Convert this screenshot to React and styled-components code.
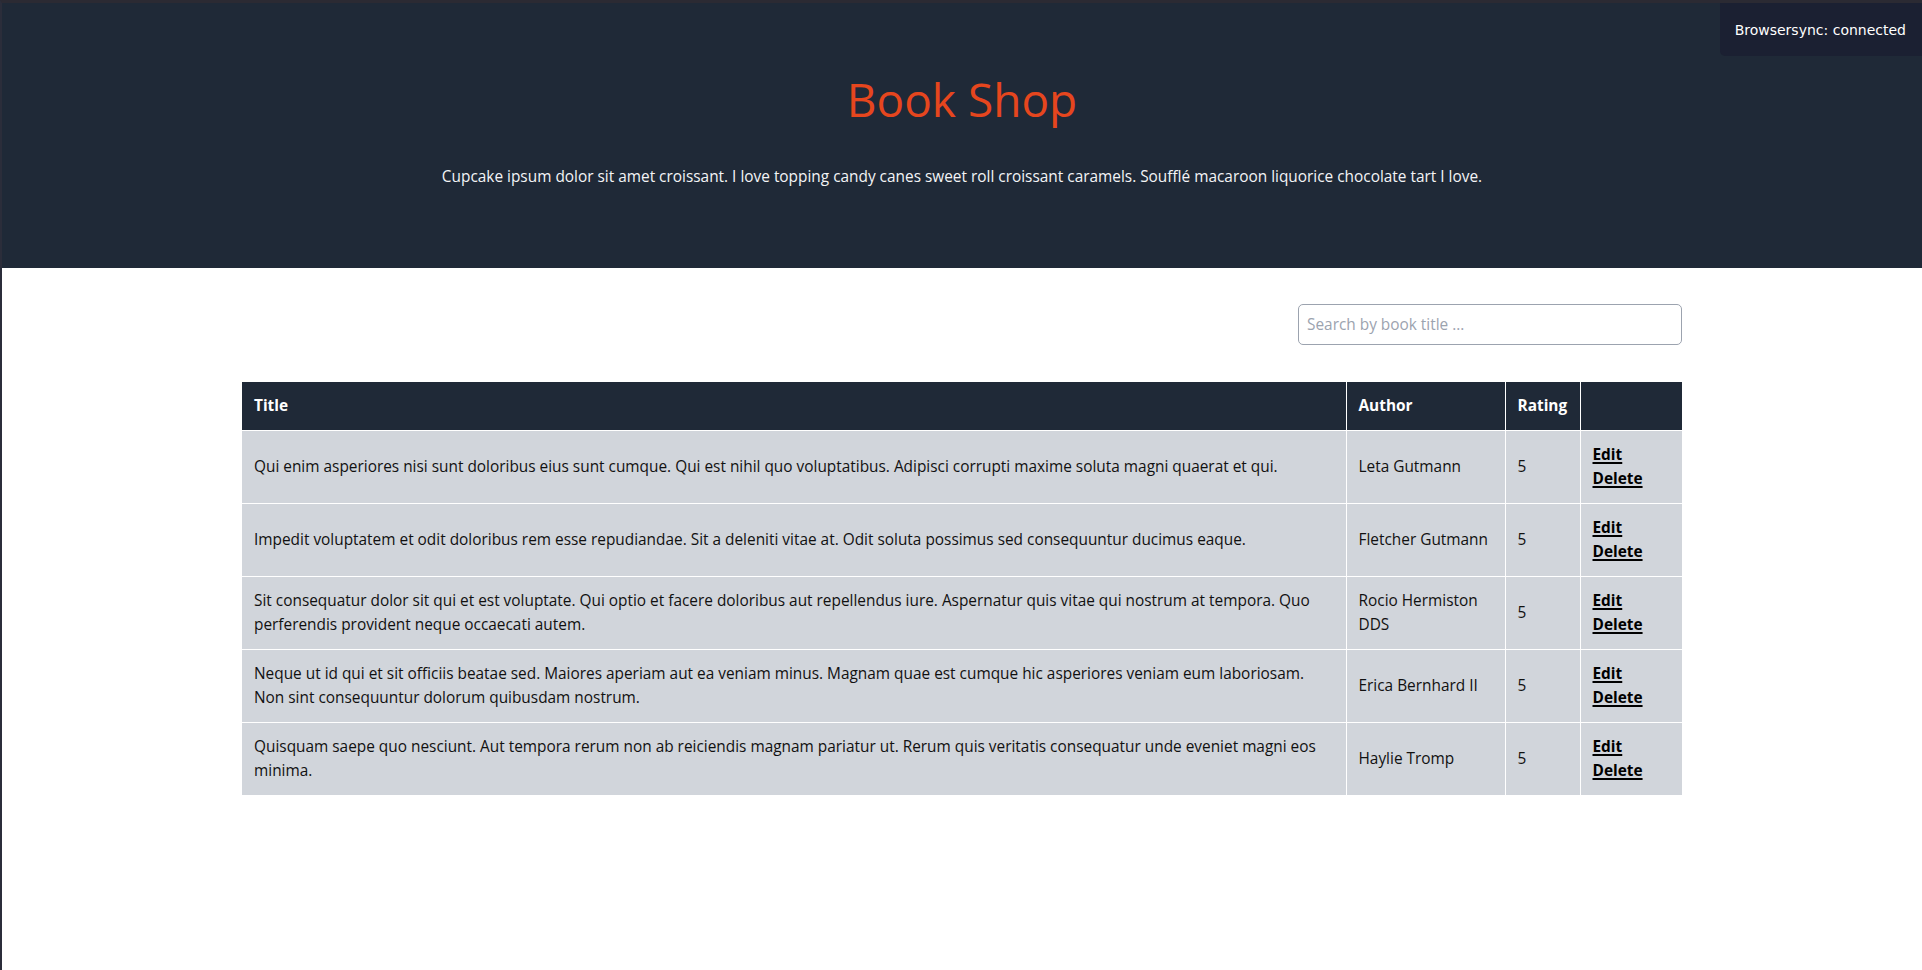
import React from 'react';
import styled, { createGlobalStyle } from 'styled-components';

const FONT = `"Open Sans", "Noto Sans", Arial, sans-serif`;

const GlobalStyle = createGlobalStyle`
  * { box-sizing: border-box; }
  html, body { margin: 0; padding: 0; background: #ffffff; }
  body { font-family: ${FONT}; color: #111827; }
`;

const Page = styled.div`
  min-height: 970px;
  border-top: 3px solid #2b2a33;
  border-left: 2px solid #2b2d3a;
  background: #ffffff;
`;

const Hero = styled.header`
  background: #1f2937;
  height: 265px;
  display: flex;
  flex-direction: column;
  align-items: center;
  padding-top: 73px;
`;

const Title = styled.h1`
  margin: 0;
  font-size: 46px;
  line-height: 46px;
  font-weight: 400;
  color: #e6461e;
`;

const Lead = styled.p`
  margin: 43px 0 0;
  font-size: 15.4px;
  line-height: 24px;
  color: #f3f4f6;
`;

const Badge = styled.div`
  position: fixed;
  top: 3px;
  right: 0;
  padding: 16px 16px 15px 15px;
  background: #1b2032;
  color: #ffffff;
  font-family: "DejaVu Sans", sans-serif;
  font-size: 14px;
  line-height: 22px;
  border-bottom-left-radius: 5px;
`;

const Main = styled.main`
  max-width: 1440px;
  margin: 0 auto;
  padding-top: 36px;
`;

const SearchRow = styled.div`
  display: flex;
  justify-content: flex-end;
`;

const SearchInput = styled.input`
  width: 384px;
  height: 41px;
  padding: 0 8px;
  border: 1px solid #9ca3af;
  border-radius: 5px;
  font-family: ${FONT};
  font-size: 15.4px;
  color: #111827;
  background: #ffffff;
  outline: none;
  &::placeholder { color: #9ca3af; }
`;

const Table = styled.table`
  width: 100%;
  margin-top: 37px;
  border-collapse: collapse;
  table-layout: fixed;
`;

const Col = styled.col`
  width: ${(p) => p.$w}px;
`;

const Th = styled.th`
  background: #1f2937;
  color: #ffffff;
  font-weight: 700;
  font-size: 15.4px;
  line-height: 24px;
  text-align: left;
  padding: 12px;
  border-left: 1px solid #ffffff;
  &:first-child { border-left: none; }
`;

const Td = styled.td`
  background: #d1d5db;
  color: #111111;
  font-size: 15.4px;
  line-height: 24px;
  padding: 12px;
  vertical-align: middle;
  border-top: 1px solid #ffffff;
  border-left: 1px solid #ffffff;
  &:first-child { border-left: none; }
`;

const Action = styled.a`
  display: block;
  width: max-content;
  color: #000000;
  font-weight: 700;
  text-decoration: underline;
  text-decoration-thickness: 2px;
  text-underline-offset: 2px;
  cursor: pointer;
`;

const books = [
  {
    title:
      'Qui enim asperiores nisi sunt doloribus eius sunt cumque. Qui est nihil quo voluptatibus. Adipisci corrupti maxime soluta magni quaerat et qui.',
    author: 'Leta Gutmann',
  },
  {
    title:
      'Impedit voluptatem et odit doloribus rem esse repudiandae. Sit a deleniti vitae at. Odit soluta possimus sed consequuntur ducimus eaque.',
    author: 'Fletcher Gutmann',
  },
  {
    title:
      'Sit consequatur dolor sit qui et est voluptate. Qui optio et facere doloribus aut repellendus iure. Aspernatur quis vitae qui nostrum at tempora. Quo perferendis provident neque occaecati autem.',
    author: 'Rocio Hermiston DDS',
  },
  {
    title:
      'Neque ut id qui et sit officiis beatae sed. Maiores aperiam aut ea veniam minus. Magnam quae est cumque hic asperiores veniam eum laboriosam. Non sint consequuntur dolorum quibusdam nostrum.',
    author: 'Erica Bernhard II',
  },
  {
    title:
      'Quisquam saepe quo nesciunt. Aut tempora rerum non ab reiciendis magnam pariatur ut. Rerum quis veritatis consequatur unde eveniet magni eos minima.',
    author: 'Haylie Tromp',
  },
];

export default function App() {
  return (
    <>
      <GlobalStyle />
      <Page>
        <Hero>
          <Title>Book Shop</Title>
          <Lead>
            Cupcake ipsum dolor sit amet croissant. I love topping candy canes sweet roll croissant caramels. Soufflé
            macaroon liquorice chocolate tart I love.
          </Lead>
        </Hero>
        <Main>
          <SearchRow>
            <SearchInput type="text" placeholder="Search by book title ..." />
          </SearchRow>
          <Table>
            <colgroup>
              <Col $w={1104} />
              <Col $w={159} />
              <Col $w={75} />
              <Col $w={102} />
            </colgroup>
            <thead>
              <tr>
                <Th>Title</Th>
                <Th>Author</Th>
                <Th>Rating</Th>
                <Th></Th>
              </tr>
            </thead>
            <tbody>
              {books.map((b) => (
                <tr key={b.author}>
                  <Td>{b.title}</Td>
                  <Td>{b.author}</Td>
                  <Td>5</Td>
                  <Td>
                    <Action>Edit</Action>
                    <Action>Delete</Action>
                  </Td>
                </tr>
              ))}
            </tbody>
          </Table>
        </Main>
      </Page>
      <Badge>Browsersync: connected</Badge>
    </>
  );
}
